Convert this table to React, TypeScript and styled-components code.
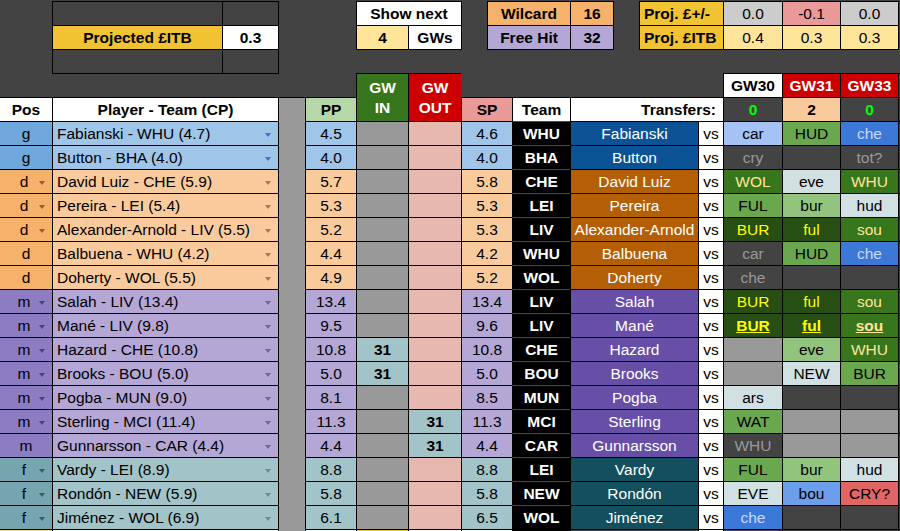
import React from 'react';
import styled, { createGlobalStyle, css } from 'styled-components';

type Grp = 'g' | 'd' | 'm' | 'f';
type FxKey = 'dk' | 'gr' | 'lb' | 'b' | 'b2' | 'g1' | 'g2' | 'g3' | 'g4' | 'gy' | 'r';

const GROUP: Record<Grp, { pos: string; light: string; dark: string; arrow: string }> = {
  g: { pos: '#6fa8dc', light: '#9fc5e8', dark: '#0b5394', arrow: '#3d78c0' },
  d: { pos: '#f6b26b', light: '#f9cb9c', dark: '#b45f06', arrow: '#b8742f' },
  m: { pos: '#8e7cc3', light: '#b4a7d6', dark: '#674ea7', arrow: '#7462b0' },
  f: { pos: '#76a5af', light: '#a2c4c9', dark: '#134f5c', arrow: '#6b8c92' },
};

const FX: Record<FxKey, { bg: string; fg: string }> = {
  dk: { bg: '#434343', fg: '#999999' },
  gr: { bg: '#999999', fg: '#000000' },
  lb: { bg: '#a4c2f4', fg: '#000000' },
  b: { bg: '#3c78d8', fg: '#c9daf8' },
  b2: { bg: '#6d9eeb', fg: '#000000' },
  g1: { bg: '#274e13', fg: '#ffff00' },
  g2: { bg: '#38761d', fg: '#ffe599' },
  g3: { bg: '#6aa84f', fg: '#000000' },
  g4: { bg: '#93c47d', fg: '#000000' },
  gy: { bg: '#d0e0e3', fg: '#000000' },
  r: { bg: '#e06666', fg: '#000000' },
};

type Row = {
  grp: Grp;
  arrow: boolean;
  player: string;
  pp: string;
  gin?: string;
  gout?: string;
  sp: string;
  team: string;
  name: string;
  fx: [string, FxKey][];
  strong?: boolean;
};

const ROWS: Row[] = [
  { grp: 'g', arrow: false, player: 'Fabianski - WHU (4.7)', pp: '4.5', sp: '4.6', team: 'WHU', name: 'Fabianski', fx: [['car', 'lb'], ['HUD', 'g3'], ['che', 'b']] },
  { grp: 'g', arrow: false, player: 'Button - BHA (4.0)', pp: '4.0', sp: '4.0', team: 'BHA', name: 'Button', fx: [['cry', 'dk'], ['', 'dk'], ['tot?', 'dk']] },
  { grp: 'd', arrow: true, player: 'David Luiz - CHE (5.9)', pp: '5.7', sp: '5.8', team: 'CHE', name: 'David Luiz', fx: [['WOL', 'g2'], ['eve', 'gy'], ['WHU', 'g2']] },
  { grp: 'd', arrow: true, player: 'Pereira - LEI (5.4)', pp: '5.3', sp: '5.3', team: 'LEI', name: 'Pereira', fx: [['FUL', 'g3'], ['bur', 'g4'], ['hud', 'gy']] },
  { grp: 'd', arrow: true, player: 'Alexander-Arnold - LIV (5.5)', pp: '5.2', sp: '5.3', team: 'LIV', name: 'Alexander-Arnold', fx: [['BUR', 'g1'], ['ful', 'g1'], ['sou', 'g2']] },
  { grp: 'd', arrow: false, player: 'Balbuena - WHU (4.2)', pp: '4.4', sp: '4.2', team: 'WHU', name: 'Balbuena', fx: [['car', 'dk'], ['HUD', 'g3'], ['che', 'b']] },
  { grp: 'd', arrow: false, player: 'Doherty - WOL (5.5)', pp: '4.9', sp: '5.2', team: 'WOL', name: 'Doherty', fx: [['che', 'dk'], ['', 'dk'], ['', 'dk']] },
  { grp: 'm', arrow: true, player: 'Salah - LIV (13.4)', pp: '13.4', sp: '13.4', team: 'LIV', name: 'Salah', fx: [['BUR', 'g1'], ['ful', 'g1'], ['sou', 'g2']] },
  { grp: 'm', arrow: true, player: 'Mané - LIV (9.8)', pp: '9.5', sp: '9.6', team: 'LIV', name: 'Mané', fx: [['BUR', 'g1'], ['ful', 'g1'], ['sou', 'g2']], strong: true },
  { grp: 'm', arrow: true, player: 'Hazard - CHE (10.8)', pp: '10.8', gin: '31', sp: '10.8', team: 'CHE', name: 'Hazard', fx: [['', 'gr'], ['eve', 'g4'], ['WHU', 'g2']] },
  { grp: 'm', arrow: true, player: 'Brooks - BOU (5.0)', pp: '5.0', gin: '31', sp: '5.0', team: 'BOU', name: 'Brooks', fx: [['', 'gr'], ['NEW', 'gy'], ['BUR', 'g3']] },
  { grp: 'm', arrow: true, player: 'Pogba - MUN (9.0)', pp: '8.1', sp: '8.5', team: 'MUN', name: 'Pogba', fx: [['ars', 'gy'], ['', 'dk'], ['', 'dk']] },
  { grp: 'm', arrow: true, player: 'Sterling - MCI (11.4)', pp: '11.3', gout: '31', sp: '11.3', team: 'MCI', name: 'Sterling', fx: [['WAT', 'g3'], ['', 'gr'], ['', 'gr']] },
  { grp: 'm', arrow: false, player: 'Gunnarsson - CAR (4.4)', pp: '4.4', gout: '31', sp: '4.4', team: 'CAR', name: 'Gunnarsson', fx: [['WHU', 'dk'], ['', 'gr'], ['', 'gr']] },
  { grp: 'f', arrow: true, player: 'Vardy - LEI (8.9)', pp: '8.8', sp: '8.8', team: 'LEI', name: 'Vardy', fx: [['FUL', 'g3'], ['bur', 'g4'], ['hud', 'gy']] },
  { grp: 'f', arrow: true, player: 'Rondón - NEW (5.9)', pp: '5.8', sp: '5.8', team: 'NEW', name: 'Rondón', fx: [['EVE', 'gy'], ['bou', 'b2'], ['CRY?', 'r']] },
  { grp: 'f', arrow: true, player: 'Jiménez - WOL (6.9)', pp: '6.1', sp: '6.5', team: 'WOL', name: 'Jiménez', fx: [['che', 'b'], ['', 'dk'], ['', 'dk']] },
];

const GlobalStyle = createGlobalStyle`
  html, body { margin: 0; padding: 0; background: #434343; }
  body { font-family: "Liberation Sans", Arial, sans-serif; }
`;

const Page = styled.div`
  width: 900px;
  height: 531px;
  overflow: hidden;
  background: #434343;
  font-family: "Liberation Sans", Arial, sans-serif;
  font-size: 15.5px;
  color: #000;
`;

/* ---------- top panel ---------- */

const TopBar = styled.div`
  display: flex;
  align-items: flex-start;
  height: 73px;
`;

const InfoBox = styled.div<{ $cols: string; $ml: number }>`
  margin-left: ${(p) => p.$ml}px;
  margin-top: 1px;
  display: grid;
  grid-template-columns: ${(p) => p.$cols};
  grid-auto-rows: 23px;
  gap: 1px;
  padding: 1px;
  background: #000;
  flex: none;
`;

const InfoCell = styled.div<{ $bg: string; $bold?: boolean; $left?: boolean; $span?: number }>`
  background: ${(p) => p.$bg};
  font-weight: ${(p) => (p.$bold ? 700 : 400)};
  display: flex;
  align-items: center;
  justify-content: ${(p) => (p.$left ? 'flex-start' : 'center')};
  padding-left: ${(p) => (p.$left ? '4px' : '0')};
  grid-column: ${(p) => (p.$span ? `span ${p.$span}` : 'auto')};
  white-space: nowrap;
`;

/* ---------- sheet ---------- */

const Sheet = styled.div`
  display: grid;
  grid-template-columns: 52px 226px 27px 51px 52px 53px 51px 58px 128px 25px 59px 58px 58px 1fr;
  grid-auto-rows: 24px;
`;

const cellBase = css`
  box-sizing: border-box;
  border-top: 1px solid #000;
  border-left: 1px solid #000;
  display: flex;
  align-items: center;
  justify-content: center;
  white-space: nowrap;
  overflow: hidden;
  min-width: 0;
`;

const Blank = styled.div<{ $span: number }>`
  grid-column: span ${(p) => p.$span};
`;

const GwHead = styled.div<{ $bg: string; $fg: string }>`
  ${cellBase};
  background: ${(p) => p.$bg};
  color: ${(p) => p.$fg};
  font-weight: 700;
`;

const MoveHead = styled.div<{ $bg: string; $col: number }>`
  ${cellBase};
  grid-column: ${(p) => p.$col};
  grid-row: 1 / span 2;
  background: ${(p) => p.$bg};
  color: #fff;
  font-weight: 700;
  text-align: center;
  line-height: 20px;
`;

const GapColumn = styled.div`
  ${cellBase};
  grid-column: 3;
  grid-row: 2 / span 20;
  background: #999999;
`;

const HeadCell = styled.div<{ $bg: string; $noLeft?: boolean; $span?: number; $right?: boolean }>`
  ${cellBase};
  background: ${(p) => p.$bg};
  font-weight: 700;
  ${(p) => (p.$noLeft ? 'border-left: none;' : '')}
  grid-column: ${(p) => (p.$span ? `span ${p.$span}` : 'auto')};
  justify-content: ${(p) => (p.$right ? 'flex-end' : 'center')};
  padding-right: ${(p) => (p.$right ? '7px' : '0')};
`;

const CountCell = styled.div<{ $bg: string; $fg: string }>`
  ${cellBase};
  background: ${(p) => p.$bg};
  color: ${(p) => p.$fg};
  font-weight: 700;
`;

const EdgeCell = styled.div`
  ${cellBase};
  background: #434343;
`;

const PosCell = styled.div<{ $grp: Grp; $arrow: boolean }>`
  ${cellBase};
  border-left: none;
  position: relative;
  background: ${(p) => GROUP[p.$grp].pos};
  padding-right: ${(p) => (p.$arrow ? '4px' : '0')};
`;

const Caret = styled.span<{ $color: string; $right: number }>`
  position: absolute;
  right: ${(p) => p.$right}px;
  top: 50%;
  margin-top: -1px;
  width: 0;
  height: 0;
  border-left: 3.5px solid transparent;
  border-right: 3.5px solid transparent;
  border-top: 4px solid ${(p) => p.$color};
`;

const PlayerCell = styled.div<{ $grp: Grp }>`
  ${cellBase};
  position: relative;
  justify-content: flex-start;
  padding-left: 4px;
  background: ${(p) => GROUP[p.$grp].light};
`;

const StatCell = styled.div<{ $grp: Grp }>`
  ${cellBase};
  background: ${(p) => GROUP[p.$grp].light};
`;

const MoveCell = styled.div<{ $kind: 'in' | 'out'; $on: boolean }>`
  ${cellBase};
  font-weight: 700;
  background: ${(p) => (p.$on ? '#a2c4c9' : p.$kind === 'in' ? '#999999' : '#e6b8af')};
`;

const TeamCell = styled.div`
  ${cellBase};
  border-top-color: #4a4a4a;
  background: #000;
  color: #fff;
  font-weight: 700;
`;

const NameCell = styled.div<{ $grp: Grp }>`
  ${cellBase};
  background: ${(p) => GROUP[p.$grp].dark};
  color: #fff;
`;

const VsCell = styled.div`
  ${cellBase};
  background: #fff;
`;

const FixtureCell = styled.div<{ $fx: FxKey; $strong?: boolean }>`
  ${cellBase};
  background: ${(p) => FX[p.$fx].bg};
  color: ${(p) => FX[p.$fx].fg};
  ${(p) =>
    p.$strong &&
    css`
      font-weight: 700;
      text-decoration: underline;
    `}
`;

const FootCell = styled.div<{ $bg: string; $noLeft?: boolean }>`
  ${cellBase};
  background: ${(p) => p.$bg};
  ${(p) => (p.$noLeft ? 'border-left: none;' : '')}
`;

function DataRow({ r }: { r: Row }) {
  const g = GROUP[r.grp];
  return (
    <>
      <PosCell $grp={r.grp} $arrow={r.arrow}>
        {r.grp}
        {r.arrow && <Caret $color="rgba(0,0,0,0.45)" $right={7} />}
      </PosCell>
      <PlayerCell $grp={r.grp}>
        {r.player}
        <Caret $color={g.arrow} $right={7} />
      </PlayerCell>
      <StatCell $grp={r.grp}>{r.pp}</StatCell>
      <MoveCell $kind="in" $on={!!r.gin}>{r.gin}</MoveCell>
      <MoveCell $kind="out" $on={!!r.gout}>{r.gout}</MoveCell>
      <StatCell $grp={r.grp}>{r.sp}</StatCell>
      <TeamCell>{r.team}</TeamCell>
      <NameCell $grp={r.grp}>{r.name}</NameCell>
      <VsCell>vs</VsCell>
      {r.fx.map(([t, k], i) => (
        <FixtureCell key={i} $fx={k} $strong={r.strong}>
          {t}
        </FixtureCell>
      ))}
      <EdgeCell />
    </>
  );
}

export default function App() {
  return (
    <Page>
      <GlobalStyle />
      <TopBar>
        <InfoBox $cols="169px 55px" $ml={52}>
          <InfoCell $bg="#434343" />
          <InfoCell $bg="#434343" />
          <InfoCell $bg="#f1c232" $bold>Projected £ITB</InfoCell>
          <InfoCell $bg="#ffffff" $bold>0.3</InfoCell>
          <InfoCell $bg="#434343" />
          <InfoCell $bg="#434343" />
        </InfoBox>
        <InfoBox $cols="51px 52px" $ml={77}>
          <InfoCell $bg="#ffffff" $bold $span={2}>Show next</InfoCell>
          <InfoCell $bg="#ffe599" $bold>4</InfoCell>
          <InfoCell $bg="#ffffff" $bold>GWs</InfoCell>
        </InfoBox>
        <InfoBox $cols="82px 42px" $ml={25}>
          <InfoCell $bg="#f6b26b" $bold>Wilcard</InfoCell>
          <InfoCell $bg="#f6b26b" $bold>16</InfoCell>
          <InfoCell $bg="#b4a7d6" $bold>Free Hit</InfoCell>
          <InfoCell $bg="#b4a7d6" $bold>32</InfoCell>
        </InfoBox>
        <InfoBox $cols="83px 58px 57px 57px" $ml={25}>
          <InfoCell $bg="#f1c232" $bold $left>Proj. £+/-</InfoCell>
          <InfoCell $bg="#cccccc">0.0</InfoCell>
          <InfoCell $bg="#ea9999">-0.1</InfoCell>
          <InfoCell $bg="#cccccc">0.0</InfoCell>
          <InfoCell $bg="#f1c232" $bold $left>Proj. £ITB</InfoCell>
          <InfoCell $bg="#ffe599">0.4</InfoCell>
          <InfoCell $bg="#ffe599">0.3</InfoCell>
          <InfoCell $bg="#ffe599">0.3</InfoCell>
        </InfoBox>
      </TopBar>

      <Sheet>
        <MoveHead $bg="#38761d" $col={5}>
          GW
          <br />
          IN
        </MoveHead>
        <MoveHead $bg="#cc0000" $col={6}>
          GW
          <br />
          OUT
        </MoveHead>
        <GapColumn />

        <Blank $span={4} />
        <Blank $span={4} />
        <GwHead $bg="#ffffff" $fg="#000">GW30</GwHead>
        <GwHead $bg="#cc0000" $fg="#fff">GW31</GwHead>
        <GwHead $bg="#cc0000" $fg="#fff">GW33</GwHead>
        <EdgeCell />

        <HeadCell $bg="#ffffff" $noLeft>Pos</HeadCell>
        <HeadCell $bg="#ffffff">Player - Team (CP)</HeadCell>
        <HeadCell $bg="#b6d7a8">PP</HeadCell>
        <HeadCell $bg="#ea9999">SP</HeadCell>
        <HeadCell $bg="#ffffff">Team</HeadCell>
        <HeadCell $bg="#ffffff" $span={2} $right>Transfers:</HeadCell>
        <CountCell $bg="#434343" $fg="#00ff00">0</CountCell>
        <CountCell $bg="#f9cb9c" $fg="#000">2</CountCell>
        <CountCell $bg="#434343" $fg="#00ff00">0</CountCell>
        <EdgeCell />

        {ROWS.map((r, i) => (
          <DataRow key={i} r={r} />
        ))}

        <FootCell $bg="#ffd966" $noLeft />
        <FootCell $bg="#ffffff" />
        <FootCell $bg="#ffffff" />
        <FootCell $bg="#f1c232" />
        <FootCell $bg="#ffffff" />
        <FootCell $bg="#ffffff" />
        <FootCell $bg="#000000" />
        <FootCell $bg="#434343" />
        <FootCell $bg="#ffffff" />
        <FootCell $bg="#434343" />
        <FootCell $bg="#434343" />
        <FootCell $bg="#434343" />
        <EdgeCell />
      </Sheet>
    </Page>
  );
}
